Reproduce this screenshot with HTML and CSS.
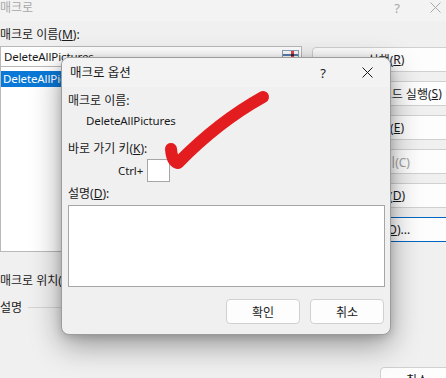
FILE: index.html
```html
<!DOCTYPE html>
<html lang="ko">
<head>
    <meta charset="UTF-8">
    <title>매크로</title>
    <link rel="stylesheet" href="styles.css">
</head>
<body>
    <div class="window">
        <div class="titlebar">
            <span class="title">매크로</span>
            <span class="tb-btns">
                <span>?</span>
                <svg width="11" height="11" viewBox="0 0 11 11"><path d="M0.5 0.5L10.5 10.5M10.5 0.5L0.5 10.5" stroke="#a8a8a8" stroke-width="1"/></svg>
            </span>
        </div>
        <div class="main">
            <div class="left">
                <div class="lbl">매크로 이름(<u>M</u>):</div>
                <div class="namebox">
                    <span class="latin">DeleteAllPictures</span>
                    <span class="pick"></span>
                </div>
                <div class="list">
                    <div class="item sel latin">DeleteAllPictures</div>
                </div>
                <div class="lbl loc">매크로 위치(<u>A</u>):</div>
                <div class="group"><span>설명</span><span class="rule"></span></div>
            </div>
            <div class="right">
                <div class="btn">실행(<u>R</u>)</div>
                <div class="btn">한 단계씩 코드 실행(<u>S</u>)</div>
                <div class="btn">편집(<u>E</u>)</div>
                <div class="btn off">만들기(C)</div>
                <div class="btn">삭제(<u>D</u>)</div>
                <div class="btn def">옵션(<u>O</u>)...</div>
            </div>
        </div>
        <div class="foot"><div class="btn small">취소</div></div>
    </div>

    <div class="dialog">
        <div class="d-title">
            <span>매크로 옵션</span>
            <span class="tb-btns">
                <span>?</span>
                <svg width="11" height="11" viewBox="0 0 11 11"><path d="M0.5 0.5L10.5 10.5M10.5 0.5L0.5 10.5" stroke="#1a1a1a" stroke-width="1"/></svg>
            </span>
        </div>
        <div class="d-body">
            <div class="lbl">매크로 이름:</div>
            <div class="macro latin">DeleteAllPictures</div>
            <div class="lbl key">바로 가기 키(<u>K</u>):</div>
            <div class="ctrl"><span class="latin">Ctrl+</span><span class="keybox"></span></div>
            <div class="lbl">설명(<u>D</u>):</div>
            <div class="desc"></div>
            <div class="d-btns">
                <div class="btn">확인</div>
                <div class="btn">취소</div>
            </div>
        </div>
    </div>

    <svg class="check" width="446" height="378" viewBox="0 0 446 378">
        <path d="M171 149 Q172 162 178 163 Q218 122 263 97" fill="none" stroke="#e31c1f" stroke-width="12" stroke-linecap="round" stroke-linejoin="round"/>
    </svg>
</body>
</html>
```

FILE: styles.css
```css
body {
    margin: 0;
    width: 446px;
    height: 378px;
    overflow: hidden;
    background: #f0f0f0;
    font-family: "Noto Sans", "Noto Sans CJK KR", sans-serif;
    font-size: 12px;
    color: #1a1a1a;
    position: relative;
}

u {
    text-decoration: underline;
    text-underline-offset: 1px;
}

.latin {
    font-size: 11.5px;
    letter-spacing: -0.1px;
}

/* background window */
.window {
    display: flex;
    flex-direction: column;
    height: 378px;
}

.titlebar {
    height: 21px;
    background: #f3f3f3;
    display: flex;
    align-items: center;
    justify-content: space-between;
    color: #a8a8a8;
    font-size: 12px;
}

.title {
    margin-top: -8px;
}

.titlebar .tb-btns {
    display: flex;
    align-items: center;
    gap: 30px;
    margin-right: 5px;
    margin-top: -6px;
    font-size: 13px;
}

.main {
    display: flex;
    gap: 10px;
}

.left {
    width: 302px;
    flex-shrink: 0;
    display: flex;
    flex-direction: column;
}

.lbl {
    line-height: 16px;
    height: 16px;
}

.window .left > .lbl:first-child {
    margin-top: 6px;
    margin-bottom: 3px;
}

.namebox {
    height: 21px;
    box-sizing: border-box;
    background: #fff;
    border: 1px solid #b9b9b9;
    display: flex;
    align-items: center;
    justify-content: space-between;
    padding-left: 3px;
}

.pick {
    width: 15px;
    height: 11px;
    margin-right: 2px;
    border: 1px solid #8aa0b8;
    background: linear-gradient(90deg, #fff 0 8px, #d44 8px 11px, #fff 11px),
        linear-gradient(#fff 0 3px, #5b7fb0 3px 5px, #fff 5px);
    background-blend-mode: multiply;
}

.list {
    height: 185px;
    box-sizing: border-box;
    background: #fff;
    border: 1px solid #b9b9b9;
    border-top: none;
    padding-top: 4px;
}

.item {
    height: 16px;
    line-height: 16px;
    padding-left: 2px;
}

.item.sel {
    background: #0a78d7;
    color: #fff;
}

.lbl.loc {
    margin-top: 21px;
}

.group {
    display: flex;
    align-items: center;
    gap: 6px;
    margin-top: 9px;
}

.rule {
    flex: 1;
    height: 1px;
    background: #d4d4d4;
}

.right {
    display: flex;
    flex-direction: column;
    gap: 9px;
    margin-top: 26px;
    width: 148px;
    flex-shrink: 0;
}

.btn {
    height: 25px;
    box-sizing: border-box;
    border: 1px solid #d0d0d0;
    border-radius: 4px;
    background: #fdfdfd;
    display: flex;
    align-items: center;
    justify-content: center;
}

.btn.off {
    color: #a0a0a0;
}

.btn.def {
    border: 1px solid #0067c0;
}

.foot {
    margin-top: auto;
    display: flex;
    justify-content: flex-end;
}

.btn.small {
    width: 74px;
    margin-right: -8px;
    margin-bottom: -14px;
}

/* macro options dialog (overlay) */
.dialog {
    position: absolute;
    left: 61px;
    top: 57px;
    width: 330px;
    height: 278px;
    box-sizing: border-box;
    border: 1px solid #9c9c9c;
    border-radius: 8px;
    background: #f0f0f0;
    box-shadow: 0 10px 30px rgba(0, 0, 0, 0.38), 0 2px 8px rgba(0, 0, 0, 0.15);
    overflow: hidden;
    display: flex;
    flex-direction: column;
}

.d-title {
    height: 29px;
    background: #f3f3f3;
    display: flex;
    align-items: center;
    justify-content: space-between;
    padding-left: 8px;
    font-size: 12.5px;
}

.d-title > span:first-child {
    margin-top: -2px;
}

.d-title .tb-btns {
    display: flex;
    align-items: center;
    gap: 36px;
    margin-right: 17px;
    font-size: 13px;
}

.d-body {
    padding: 6px 5px 0 6px;
    display: flex;
    flex-direction: column;
}

.macro {
    margin-top: 4px;
    padding-left: 18px;
    line-height: 16px;
}

.lbl.key {
    margin-top: 12px;
}

.ctrl {
    display: flex;
    align-items: center;
    gap: 4px;
    margin-left: 50px;
    margin-top: 2px;
    margin-bottom: 4px;
}

.keybox {
    width: 23px;
    height: 23px;
    box-sizing: border-box;
    background: #fff;
    border: 1px solid #a6a6a6;
}

.desc {
    margin-top: 3px;
    height: 82px;
    box-sizing: border-box;
    background: #fff;
    border: 1px solid #a6a6a6;
}

.d-btns {
    display: flex;
    justify-content: flex-end;
    gap: 10px;
    margin-top: 12px;
    margin-right: 1px;
}

.d-btns .btn {
    width: 74px;
    height: 25px;
}

.check {
    position: absolute;
    left: 0;
    top: 0;
}
```
